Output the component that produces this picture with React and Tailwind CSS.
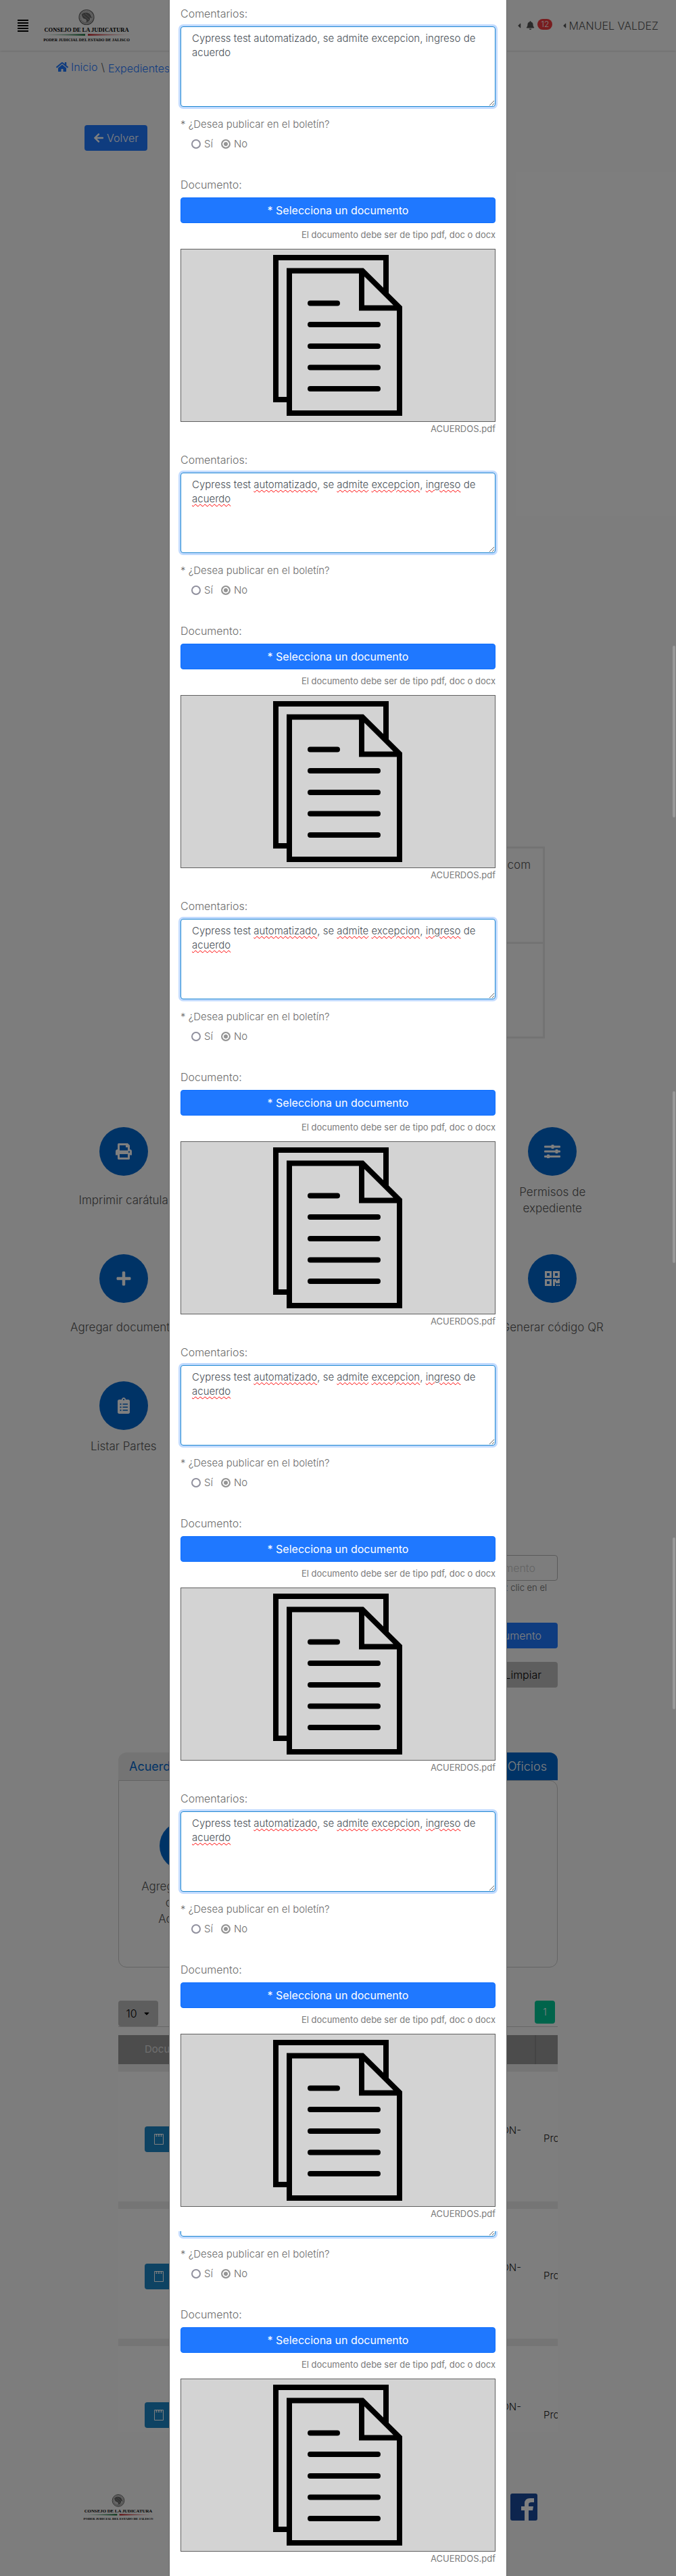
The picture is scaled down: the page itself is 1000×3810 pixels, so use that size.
import React from "react";
import { FaHome, FaArrowLeft, FaBell, FaPlus, FaClipboardList, FaCaretLeft, FaCaretDown } from "react-icons/fa";

function Brand({ className }) {
  return (
    <svg viewBox="0 0 144 50" className={className} role="img" aria-label="Consejo de la Judicatura">
      <defs>
        <linearGradient id="brandGreen">
          <stop offset="0" stopColor="#0d6b32" stopOpacity="0" />
          <stop offset="1" stopColor="#0d6b32" />
        </linearGradient>
        <linearGradient id="brandRed">
          <stop offset="0" stopColor="#c4161c" />
          <stop offset="1" stopColor="#c4161c" stopOpacity="0" />
        </linearGradient>
      </defs>
      <circle cx="72" cy="12.500" r="11" fill="#ccc" stroke="#666" strokeWidth="1.2" />
      <circle cx="72" cy="12.500" r="8.800" fill="none" stroke="#888" strokeWidth="1" strokeDasharray="1.500 1" />
      <path d="M65 8c4-4 11-3 13 1l2 5-3-1c1 4-2 7-6 7 2-2 1-4-1-5-3 0-5-3-5-7z" fill="#666" />
      <path d="M67 9l9 8M70 7l7 6M64 17c4 5 11 5 15 1" fill="none" stroke="#999" strokeWidth="1" />
      <text x="72" y="34" textAnchor="middle" fontFamily="Liberation Serif, serif" fontWeight="700" fontSize="8.500" fill="#000">CONSEJO DE LA JUDICATURA</text>
      <path d="M2 38.500 70 37.200v2.600z" fill="url(#brandGreen)" />
      <path d="M142 38.500 74 37.200v2.600z" fill="url(#brandRed)" />
      <text x="72" y="47.500" textAnchor="middle" fontFamily="Liberation Serif, serif" fontWeight="700" fontSize="6" fill="#000">PODER JUDICIAL DEL ESTADO DE JALISCO</text>
    </svg>
  );
}

function PrintIcon() {
  return (
    <svg viewBox="0 0 24 24" className="size-6" fill="currentColor" fillRule="evenodd">
      <path d="M3 9V1.500Q3 0 4.500 0H18l3 3v6a3 3 0 0 1 3 3v5.500h-3v5q0 1.500-1.500 1.500h-15Q3 24 3 22.500v-5H0V12a3 3 0 0 1 3-3zM6 3v7.500h12V6h-3V3zM6 16v5h12v-5zM20 11.500a1.200 1.200 0 1 0 .01 0z" />
    </svg>
  );
}

function SlidersIcon() {
  return (
    <svg viewBox="0 0 24 20" className="h-5 w-6" fill="currentColor">
      <rect y="1.500" width="24" height="3" rx="1" />
      <rect y="8.500" width="24" height="3" rx="1" />
      <rect y="16" width="24" height="3" rx="1" />
      <rect x="10.500" width="4" height="6" rx="1" />
      <rect x="16.500" y="7" width="4" height="6" rx="1" />
      <rect x="4" y="14.500" width="4" height="6" rx="1" />
    </svg>
  );
}

function QrIcon() {
  return (
    <svg viewBox="0 0 22 22" className="size-[22px]" fill="currentColor" fillRule="evenodd">
      <path d="M0 0h10v10H0zM3 3v4h4V3zM12 0h10v10H12zM15 3v4h4V3zM0 12h10v10H0zM3 15v4h4v-4zM12 12h5v2h2v-2h3v6h-6v-2h-1v6h-3zM17 20h2v2h-2zM20 20h2v2h-2z" />
    </svg>
  );
}

function NoteIcon() {
  return (
    <svg viewBox="0 0 14 16" className="h-4 w-[14px]" fill="none" stroke="currentColor">
      <path d="M.5.500h13v15H.5z" />
      <path d="M3.500 1v3M7 1v3M10.500 1v3" strokeWidth="2" strokeDasharray="1.500 .5" />
    </svg>
  );
}

function FilesIcon() {
  return (
    <svg viewBox="0 0 192 238" className="h-[238px] w-48" fill="none" stroke="#000" strokeWidth="8" aria-hidden="true">
      <path d="M20 214H4V4h163v56" />
      <path d="M24 23.500h108L187 78v156H24zM131 23v55.500h56" />
      <path d="M55 71.500h40M55 103h100M55 135h100M55 166.500h100M55 198h100" strokeLinecap="round" />
    </svg>
  );
}

function Shortcut({ icon, label, className = "", tight = false }) {
  return (
    <a href="#" className={`flex flex-col items-center gap-3 text-center text-[17px] leading-6 text-[#555] ${className}`}>
      <span className="flex size-[72px] items-center justify-center rounded-full bg-[#0066cc] text-white">{icon}</span>
      <span className={tight ? "flex items-center" : "flex h-12 items-center"}>{label}</span>
    </a>
  );
}

function Word({ children }) {
  return <span className="underline decoration-[#f00] decoration-wavy decoration-1 underline-offset-2">{children}</span>;
}

function Comment({ id, checked }) {
  if (!checked) {
    return (
      <textarea
        id={id}
        className="block h-[119px] w-full resize rounded border border-[#1c86d1] bg-white px-4 py-[6px] text-[15px] leading-[21px] text-[#495057] outline-none ring-3 ring-[#c2dbff]"
        defaultValue="Cypress test automatizado, se admite excepcion, ingreso de acuerdo"
      />
    );
  }
  return (
    <div className="grid">
      <textarea
        id={id}
        aria-label="Comentarios"
        className="[grid-area:1/1] block h-[119px] w-full resize rounded border border-[#1c86d1] bg-white outline-none ring-3 ring-[#c2dbff]"
      />
      <p className="pointer-events-none z-10 [grid-area:1/1] px-[17px] py-[7px] text-[15px] leading-[21px] text-[#495057]">
        Cypress test <Word>automatizado</Word>, se <Word>admite</Word> <Word>excepcion</Word>, <Word>ingreso</Word> de <Word>acuerdo</Word>
      </p>
    </div>
  );
}

function Publish({ n }) {
  return (
    <fieldset>
      <legend className="h-6 leading-6">* ¿Desea publicar en el boletín?</legend>
      <div className="mt-[5px] flex h-6 items-center gap-3 px-4">
        <label className="flex items-center gap-[5px]">
          <input type="radio" name={`boletin-${n}`} className="size-[14px] appearance-none rounded-full border-2 border-[#8f8f9d]" />
          Sí
        </label>
        <label className="flex items-center gap-[5px]">
          <input
            type="radio"
            name={`boletin-${n}`}
            defaultChecked
            className="size-[14px] appearance-none rounded-full border-2 border-[#949494] bg-[#949494] shadow-[inset_0_0_0_2px_#fff]"
          />
          No
        </label>
      </div>
    </fieldset>
  );
}

function Document() {
  return (
    <div className="mt-9">
      <p className="h-6 text-base leading-6">Documento:</p>
      <button type="button" className="mt-[7px] block h-[38px] w-full rounded border border-[#0d6efd] bg-[#1f78ff] text-base font-normal text-white">
        * Selecciona un documento
      </button>
      <p className="mt-2 h-[18px] text-right text-[13px] font-normal leading-[18px] text-[#7a7a7a]">El documento debe ser de tipo pdf, doc o docx</p>
      <div className="mt-3 flex h-64 items-center justify-center border border-[#5f5f5f] bg-[#d3d3d3]">
        <FilesIcon />
      </div>
      <p className="h-5 text-right text-[13px] font-normal leading-5 text-[#7a7a7a]">ACUERDOS.pdf</p>
    </div>
  );
}

function Entry({ n }) {
  return (
    <section className="h-[660px] pt-2">
      <label htmlFor={`comentarios-${n}`} className="block h-[31px] text-base leading-6">Comentarios:</label>
      <Comment id={`comentarios-${n}`} checked={n > 0} />
      <div className="mt-[14px]"><Publish n={n} /></div>
      <Document />
    </section>
  );
}

function Dialog() {
  return (
    <div role="dialog" aria-label="Acuerdo" className="w-[500px] border-x border-[#666] bg-white px-4 text-[15px] text-[#6c6c6c]">
      {[0, 1, 2, 3, 4].map((n) => <Entry key={n} n={n} />)}
      <section className="pb-4">
        <div className="-mx-2 flex h-[11px] items-end overflow-hidden px-2 pb-[3px]">
          <textarea aria-label="Comentarios" className="block h-[119px] w-full shrink-0 resize rounded border border-[#1c86d1] outline-none ring-3 ring-[#c2dbff]" />
        </div>
        <div className="mt-[11px]"><Publish n={5} /></div>
        <Document />
      </section>
    </div>
  );
}

function Header() {
  return (
    <header className="flex h-[75px] items-center justify-between bg-[#fbfbfb] px-[26px] shadow-sm">
      <div className="flex items-center gap-[14px]">
        <button type="button" aria-label="Menú" className="flex w-4 flex-col gap-[2px]">
          {[0, 1, 2, 3, 4].map((i) => <span key={i} className="h-[2px] bg-black" />)}
        </button>
        <Brand className="h-[50px] w-36" />
      </div>
      <div className="flex items-center text-base text-[#555]">
        <FaCaretLeft className="size-3" />
        <FaBell className="ml-1 size-[13px]" />
        <span className="mb-1 ml-1 rounded-full bg-[#f03a3e] px-[5px] text-xs text-white">12</span>
        <FaCaretLeft className="ml-3 size-3" />
        <button type="button">MANUEL VALDEZ</button>
      </div>
    </header>
  );
}

function Page() {
  return (
    <div>
      <Header />
      <nav className="flex h-12 items-center gap-1 px-[83px] text-base text-[#1f78ff]">
        <FaHome className="size-[18px]" />
        <a href="#">Inicio</a>
        <span className="mx-px text-[#555]">\</span>
        <a href="#" className="pt-1">Expedientes</a>
      </nav>
      <button type="button" className="ml-[125px] mt-[62px] flex h-[38px] w-[93px] items-center justify-center gap-1 rounded bg-[#1f78ff] text-base text-white">
        <FaArrowLeft className="size-4" />
        Volver
      </button>
      <main className="mx-auto max-w-[846px] pt-[1029px]">
        <div className="h-[283px]">
          <table className="ml-[423px] w-[306px] border-collapse border-[3px] border-[#e6e6e6] text-[17px] text-[#555]">
            <tbody>
              <tr className="h-[141px] border-b-[3px] border-[#e6e6e6] align-top"><td className="px-[18px] py-3 text-right">correo@gmail.com</td></tr>
              <tr className="h-[140px]"><td /></tr>
            </tbody>
          </table>
        </div>
        <div className="mt-[132px] grid grid-cols-4 gap-y-14">
          <Shortcut icon={<PrintIcon />} label="Imprimir carátula" />
          <Shortcut icon={<SlidersIcon />} label={<>Permisos de<br />expediente</>} className="col-start-4" />
          <Shortcut icon={<FaPlus className="size-6" />} label="Agregar documento" />
          <Shortcut icon={<QrIcon />} label="Generar código QR" className="col-start-4" />
          <Shortcut icon={<FaClipboardList className="size-6" />} label="Listar Partes" tight />
        </div>
        <div className="mx-auto max-w-[650px] pt-[149px]">
          <form className="flex flex-col items-end">
            <input aria-label="Documento" placeholder="Nombre del documento" className="h-[38px] w-[300px] rounded border border-[#b5b5b5] pr-8 text-right text-base placeholder:text-[#c8c8c8]" />
            <small className="pr-4 text-[13px] leading-5 text-[#666]">Para buscar haz clic en el</small>
            <button type="button" className="mt-[42px] h-[38px] w-[300px] rounded bg-[#1f78ff] pr-6 text-right text-base text-white">Buscar documento</button>
            <button type="button" className="mt-5 h-[38px] w-[300px] rounded bg-[#bdbdbd] pr-6 text-right text-base text-black">Limpiar</button>
          </form>
          <div className="mt-24 flex h-[41px] justify-between rounded-t-xl bg-[#e9e9e9] text-lg text-[#0066cc]">
            <button type="button" className="px-4 font-normal">Acuerdos</button>
            <button type="button" className="rounded-tr-xl bg-[#0066cc] px-4 text-white">Oficios</button>
          </div>
          <div className="h-[277px] rounded-b-xl rounded-tr-xl border border-[#c8c8c8] px-8 pt-[60px]">
            <a href="#" className="flex w-32 flex-col items-center gap-3 text-center text-[17px] leading-6 text-[#555]">
              <span className="size-[72px] rounded-full bg-[#0066cc]" />
              <span>Agregar archivo<br />con un<br />Acuerdos</span>
            </a>
          </div>
          <div className="mt-[49px] flex h-[39px] items-start justify-between border-b border-[#cfcfcf]">
            <button type="button" className="flex h-[38px] w-[59px] items-center justify-center gap-2 rounded bg-[#bdbdbd] text-base text-black">10 <FaCaretDown className="size-3" /></button>
            <button type="button" className="mr-1 h-[34px] w-[30px] rounded bg-[#00c896] text-sm text-white">1</button>
          </div>
          <div className="mt-3 h-[587px] overflow-hidden">
            <table className="w-[750px] table-fixed text-[15px] text-[#222]">
              <thead>
                <tr className="h-12 bg-[#999] text-[#ddd]">
                  <th className="w-[617px] border-r-2 border-[#888] pl-[39px] text-left font-normal">Documento</th>
                  <th />
                </tr>
              </thead>
              <tbody>
                {[0, 1, 2].map((i) => (
                  <tr key={i} className="border-t-[11px] border-[#ebebeb] bg-[#fdfdfd]">
                    <td className="h-[203px] pt-2">
                      <div className="flex items-center justify-between">
                        <button type="button" className="ml-[39px] flex h-[38px] w-24 items-center rounded bg-[#1c86c7] px-[14px] text-white"><NoteIcon /></button>
                        <span className="-mt-6 pr-[21px]">ACUERDO-ADMISION-</span>
                      </div>
                    </td>
                    <td className="pl-3 pt-2">Promoción</td>
                  </tr>
                ))}
              </tbody>
            </table>
          </div>
        </div>
      </main>
      <footer className="flex items-start justify-between px-[117px] pt-[91px]">
        <Brand className="h-[41px] w-[116px]" />
        <svg viewBox="0 0 40 40" className="mr-[88px] size-10" role="img" aria-label="Facebook">
          <rect width="40" height="40" rx="3" fill="#1b4a9c" />
          <path d="M21 40V25h-5v-6h5v-4q0-8 8-8h6v6h-4q-4 0-4 3v3h7l-1 6h-6v15z" fill="#fff" />
        </svg>
      </footer>
    </div>
  );
}

export default function App() {
  return (
    <div className="relative grid overflow-hidden bg-[#fbfbfb] font-[Inter,'Noto_Sans',sans-serif] font-light">
      <div className="[grid-area:1/1]"><Page /></div>
      <div className="z-10 flex justify-center bg-black/50 [grid-area:1/1]"><Dialog /></div>
      <span className="absolute right-[1px] top-[955px] z-20 h-[254px] w-1 rounded-full bg-[#999]" />
      <span className="absolute right-[1px] top-[1614px] z-20 h-[254px] w-1 rounded-full bg-[#999]" />
      <span className="absolute right-[1px] top-[2274px] z-20 h-[254px] w-1 rounded-full bg-[#999]" />
    </div>
  );
}
